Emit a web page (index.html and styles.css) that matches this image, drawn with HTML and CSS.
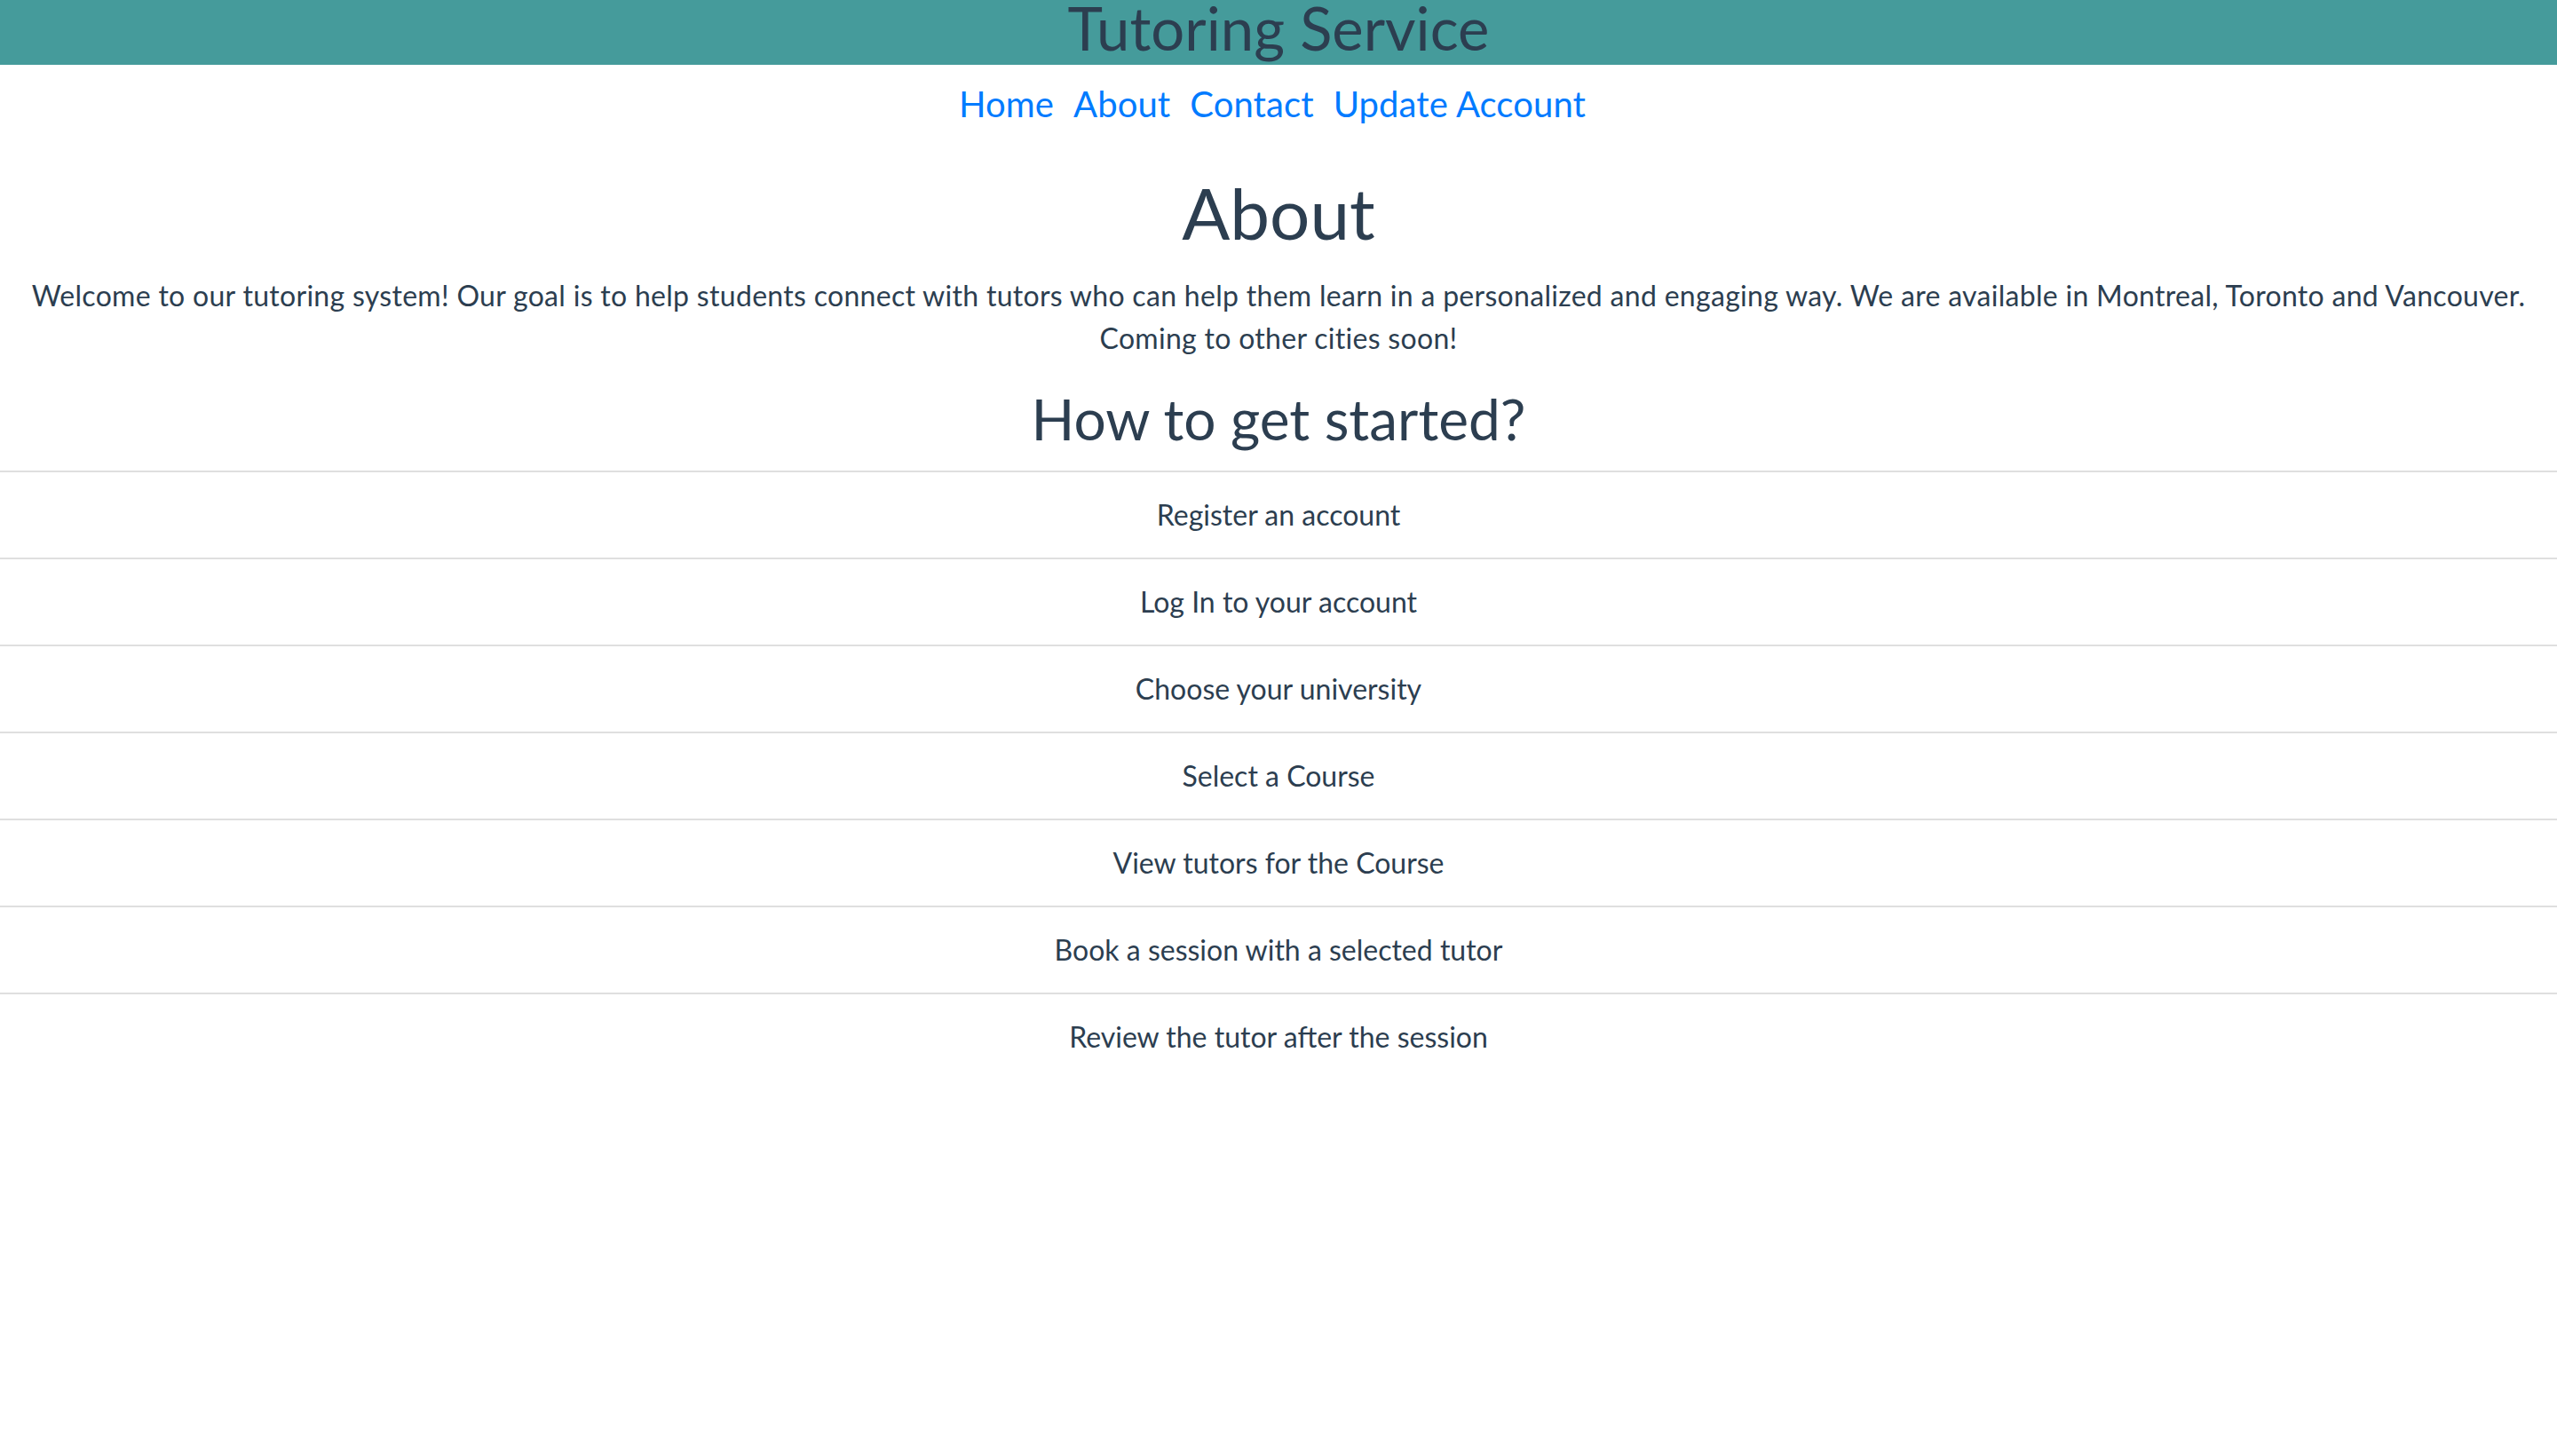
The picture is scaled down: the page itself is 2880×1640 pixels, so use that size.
FILE: index.html
```html
<!DOCTYPE html>
<html lang="en">
<head>
<meta charset="utf-8">
<title>Tutoring Service</title>
<link rel="stylesheet" href="styles.css">
</head>
<body>
<div class="app">
  <header class="topbar">
    <h1 class="brand">Tutoring Service</h1>
  </header>
  <nav class="nav">
    <a href="#">Home</a>
    <a href="#">About</a>
    <a href="#">Contact</a>
    <a href="#">Update Account</a>
  </nav>
  <main class="about">
    <h1 class="title">About</h1>
    <p class="intro">Welcome to our tutoring system! Our goal is to help students connect with tutors who can help them learn in a personalized and engaging way. We are available in Montreal, Toronto and Vancouver. Coming to other cities soon!</p>
    <h2 class="subtitle">How to get started?</h2>
    <ul class="steps">
      <li class="step">Register an account</li>
      <li class="step">Log In to your account</li>
      <li class="step">Choose your university</li>
      <li class="step">Select a Course</li>
      <li class="step">View tutors for the Course</li>
      <li class="step">Book a session with a selected tutor</li>
      <li class="step">Review the tutor after the session</li>
    </ul>
  </main>
</div>
</body>
</html>
```

FILE: styles.css
```css
html, body {
  margin: 0;
  padding: 0;
  background: #ffffff;
}

.app {
  font-family: Lato, "Noto Sans", "Liberation Sans", sans-serif;
  color: #2c3e50;
  text-align: center;
}

.topbar {
  background: #459b9b;
  height: 73px;
  overflow: hidden;
}

.brand {
  margin: 0;
  font-size: 67px;
  font-weight: 400;
  line-height: 62px;
  padding-bottom: 11px;
}

.nav {
  display: flex;
  justify-content: center;
  gap: 22px;
  padding-top: 14px;
  line-height: 60px;
  margin-left: -14px;
}

.nav a {
  color: #007bff;
  font-size: 40px;
  letter-spacing: 0.1px;
  text-decoration: none;
}

.about {
  margin-top: 44px;
}

.title {
  margin: 0 0 22px;
  font-size: 80px;
  font-weight: 400;
  line-height: 96px;
}

.intro {
  margin: 0 0 28px;
  padding: 0 16px;
  font-size: 32px;
  line-height: 48px;
  letter-spacing: 0.3px;
}

.subtitle {
  margin: 0 0 20px;
  font-size: 64px;
  font-weight: 400;
  line-height: 77px;
}

.steps {
  list-style: none;
  margin: 0;
  padding: 0;
}

.step {
  border-top: 2px solid #dfdfdf;
  padding: 24px 40px;
  font-size: 32px;
  line-height: 48px;
}
```
